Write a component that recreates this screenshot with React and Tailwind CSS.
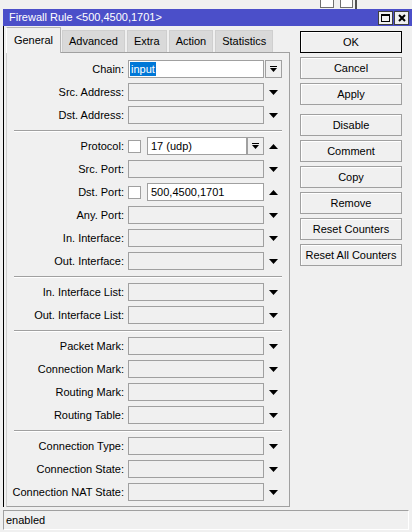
import React from 'react';

const DownArrow = () => (
    <svg width="9" height="5" viewBox="0 0 9 5">
        <path d="M0 0h9L4.5 5z" fill="#000" />
    </svg>
);

const UpArrow = () => (
    <svg width="9" height="5" viewBox="0 0 9 5">
        <path d="M0 5h9L4.5 0z" fill="#000" />
    </svg>
);

const DropButton = () => (
    <div className="flex h-[18px] w-[17px] items-center justify-center border border-[#a0a0a0] bg-[#f0f0f0]">
        <svg width="7" height="7" viewBox="0 0 7 7">
            <rect x="0" y="0" width="7" height="1" fill="#000" />
            <path d="M0 2h7L3.5 6z" fill="#000" />
        </svg>
    </div>
);

const Checkbox = () => (
    <div className="h-[13px] w-[13px] border border-[#a0a0a0] bg-white" />
);

// one label + combo row of the General tab
const Row = ({ label, children, arrow = 'down' }) => (
    <div className="flex h-[18px] items-center">
        <div className="w-[117px] whitespace-nowrap text-right">{label}</div>
        <div className="ml-[4px] flex h-full w-[136px] items-center">
            {children || <div className="h-full w-full border border-[#a0a0a0] bg-[#f0f0f0]" />}
        </div>
        <div className="ml-[1px] flex h-full w-[17px] items-center justify-center">
            {arrow === 'down' && <DownArrow />}
            {arrow === 'up' && <UpArrow />}
            {arrow === 'drop' && <DropButton />}
        </div>
    </div>
);

const Separator = () => (
    <div className="mx-[7px] mb-[5px] mt-[6px] h-[2px] border-t border-[#a0a0a0] border-b border-b-white" />
);

const Group = ({ children }) => <div className="flex flex-col gap-[5px]">{children}</div>;

const Button = ({ label, primary, className = '' }) => (
    <div
        className={`flex h-[22px] w-[102px] items-center justify-center bg-[#f0f0f0] shadow-[inset_1px_1px_0_#ffffff] ${
            primary ? 'border border-black' : 'border border-[#a0a0a0]'
        } ${className}`}
    >
        {label}
    </div>
);

const Tab = ({ label, active, className = '' }) =>
    active ? (
        <div className="relative z-10 mb-[-1px] flex h-[26px] w-[55px] items-center justify-center border-x border-t border-[#b4b4b4] border-l-white bg-[#f0f0f0] pb-[1px]">
            {label}
        </div>
    ) : (
        <div className={`flex h-[22px] items-center justify-center border-x border-t border-[#cfcfcf] bg-[#d9d9d9] px-[6px] ${className}`}>
            {label}
        </div>
    );

export default function App() {
    return (
        <div className="h-[532px] w-[412px] overflow-hidden bg-[#f0f0f0] font-['Liberation_Sans',Arial,sans-serif] text-[11px] leading-none text-black">
            {/* window behind */}
            <div className="relative h-[9px] bg-[#f0f0f0]">
                <div className="absolute left-[320px] top-0 h-[8px] w-[14px] border-x border-b border-[#707070] bg-white" />
                <div className="absolute left-[340px] top-0 h-[8px] w-[13px] border-x border-b border-[#707070] bg-white" />
                <div className="absolute left-[355px] top-0 h-[9px] w-[2px] bg-[#505050]" />
            </div>

            <div className="ml-[3px] flex flex-col">
                {/* Title bar */}
                <div className="flex h-[17px] items-center bg-[#4b4fc9] pl-[6px] pr-[3px]">
                    <span className="flex-1 text-white">Firewall Rule &lt;500,4500,1701&gt;</span>
                    <div className="flex gap-[1px]">
                        <div className="flex h-[14px] w-[15px] items-center justify-center border border-[#404040] bg-[#f0f0f0]">
                            <div className="h-[8px] w-[9px] border border-t-2 border-black" />
                        </div>
                        <div className="flex h-[14px] w-[15px] items-center justify-center border border-[#404040] bg-[#f0f0f0]">
                            <svg width="8" height="8" viewBox="0 0 8 8">
                                <path d="M1 1l6 6M7 1l-6 6" stroke="#000" strokeWidth="2" />
                            </svg>
                        </div>
                    </div>
                </div>

                {/* Body */}
                <div className="flex border-l border-black pl-[2px]">
                    <div className="w-[284px] pt-[1px]">
                        {/* Tabs */}
                        <div className="flex h-[25px] items-end">
                            <Tab label="General" active />
                            <Tab label="Advanced" className="ml-[1px]" />
                            <Tab label="Extra" className="ml-[2px]" />
                            <Tab label="Action" className="ml-[2px]" />
                            <Tab label="Statistics" className="ml-[2px]" />
                        </div>

                        {/* Tab panel */}
                        <div className="border border-[#a0a0a0] border-l-[#d0d0d0] pb-[5px] pt-[7px]">
                            <Group>
                                <Row label="Chain:" arrow="drop">
                                    <div className="flex h-full w-full items-center border border-[#a0a0a0] bg-white pl-[1px]">
                                        <span className="flex h-[14px] items-center bg-[#0078d7] px-[1px] text-white">input</span>
                                    </div>
                                </Row>
                                <Row label="Src. Address:" />
                                <Row label="Dst. Address:" />
                            </Group>
                            <Separator />
                            <Group>
                                <Row label="Protocol:" arrow="up">
                                    <Checkbox />
                                    <div className="ml-[6px] flex h-full w-[100px] items-center border border-[#a0a0a0] bg-white pl-[3px]">
                                        17 (udp)
                                    </div>
                                    <DropButton />
                                </Row>
                                <Row label="Src. Port:" />
                                <Row label="Dst. Port:" arrow="up">
                                    <Checkbox />
                                    <div className="ml-[6px] flex h-full flex-1 items-center border border-[#a0a0a0] bg-white pl-[3px]">
                                        500,4500,1701
                                    </div>
                                </Row>
                                <Row label="Any. Port:" />
                                <Row label="In. Interface:" />
                                <Row label="Out. Interface:" />
                            </Group>
                            <Separator />
                            <Group>
                                <Row label="In. Interface List:" />
                                <Row label="Out. Interface List:" />
                            </Group>
                            <Separator />
                            <Group>
                                <Row label="Packet Mark:" />
                                <Row label="Connection Mark:" />
                                <Row label="Routing Mark:" />
                                <Row label="Routing Table:" />
                            </Group>
                            <Separator />
                            <Group>
                                <Row label="Connection Type:" />
                                <Row label="Connection State:" />
                                <Row label="Connection NAT State:" />
                            </Group>
                        </div>
                    </div>

                    {/* Buttons */}
                    <div className="ml-[10px] flex flex-col gap-[4px] pt-[5px]">
                        <Button label="OK" primary />
                        <Button label="Cancel" />
                        <Button label="Apply" />
                        <Button label="Disable" className="mt-[5px]" />
                        <Button label="Comment" />
                        <Button label="Copy" />
                        <Button label="Remove" />
                        <Button label="Reset Counters" />
                        <Button label="Reset All Counters" />
                    </div>
                </div>

                {/* Status bar */}
                <div className="mt-[3px] flex h-[20px] w-[406px] items-center border border-[#a0a0a0] border-b-white border-r-white pl-[2px]">
                    enabled
                </div>
            </div>
        </div>
    );
}
